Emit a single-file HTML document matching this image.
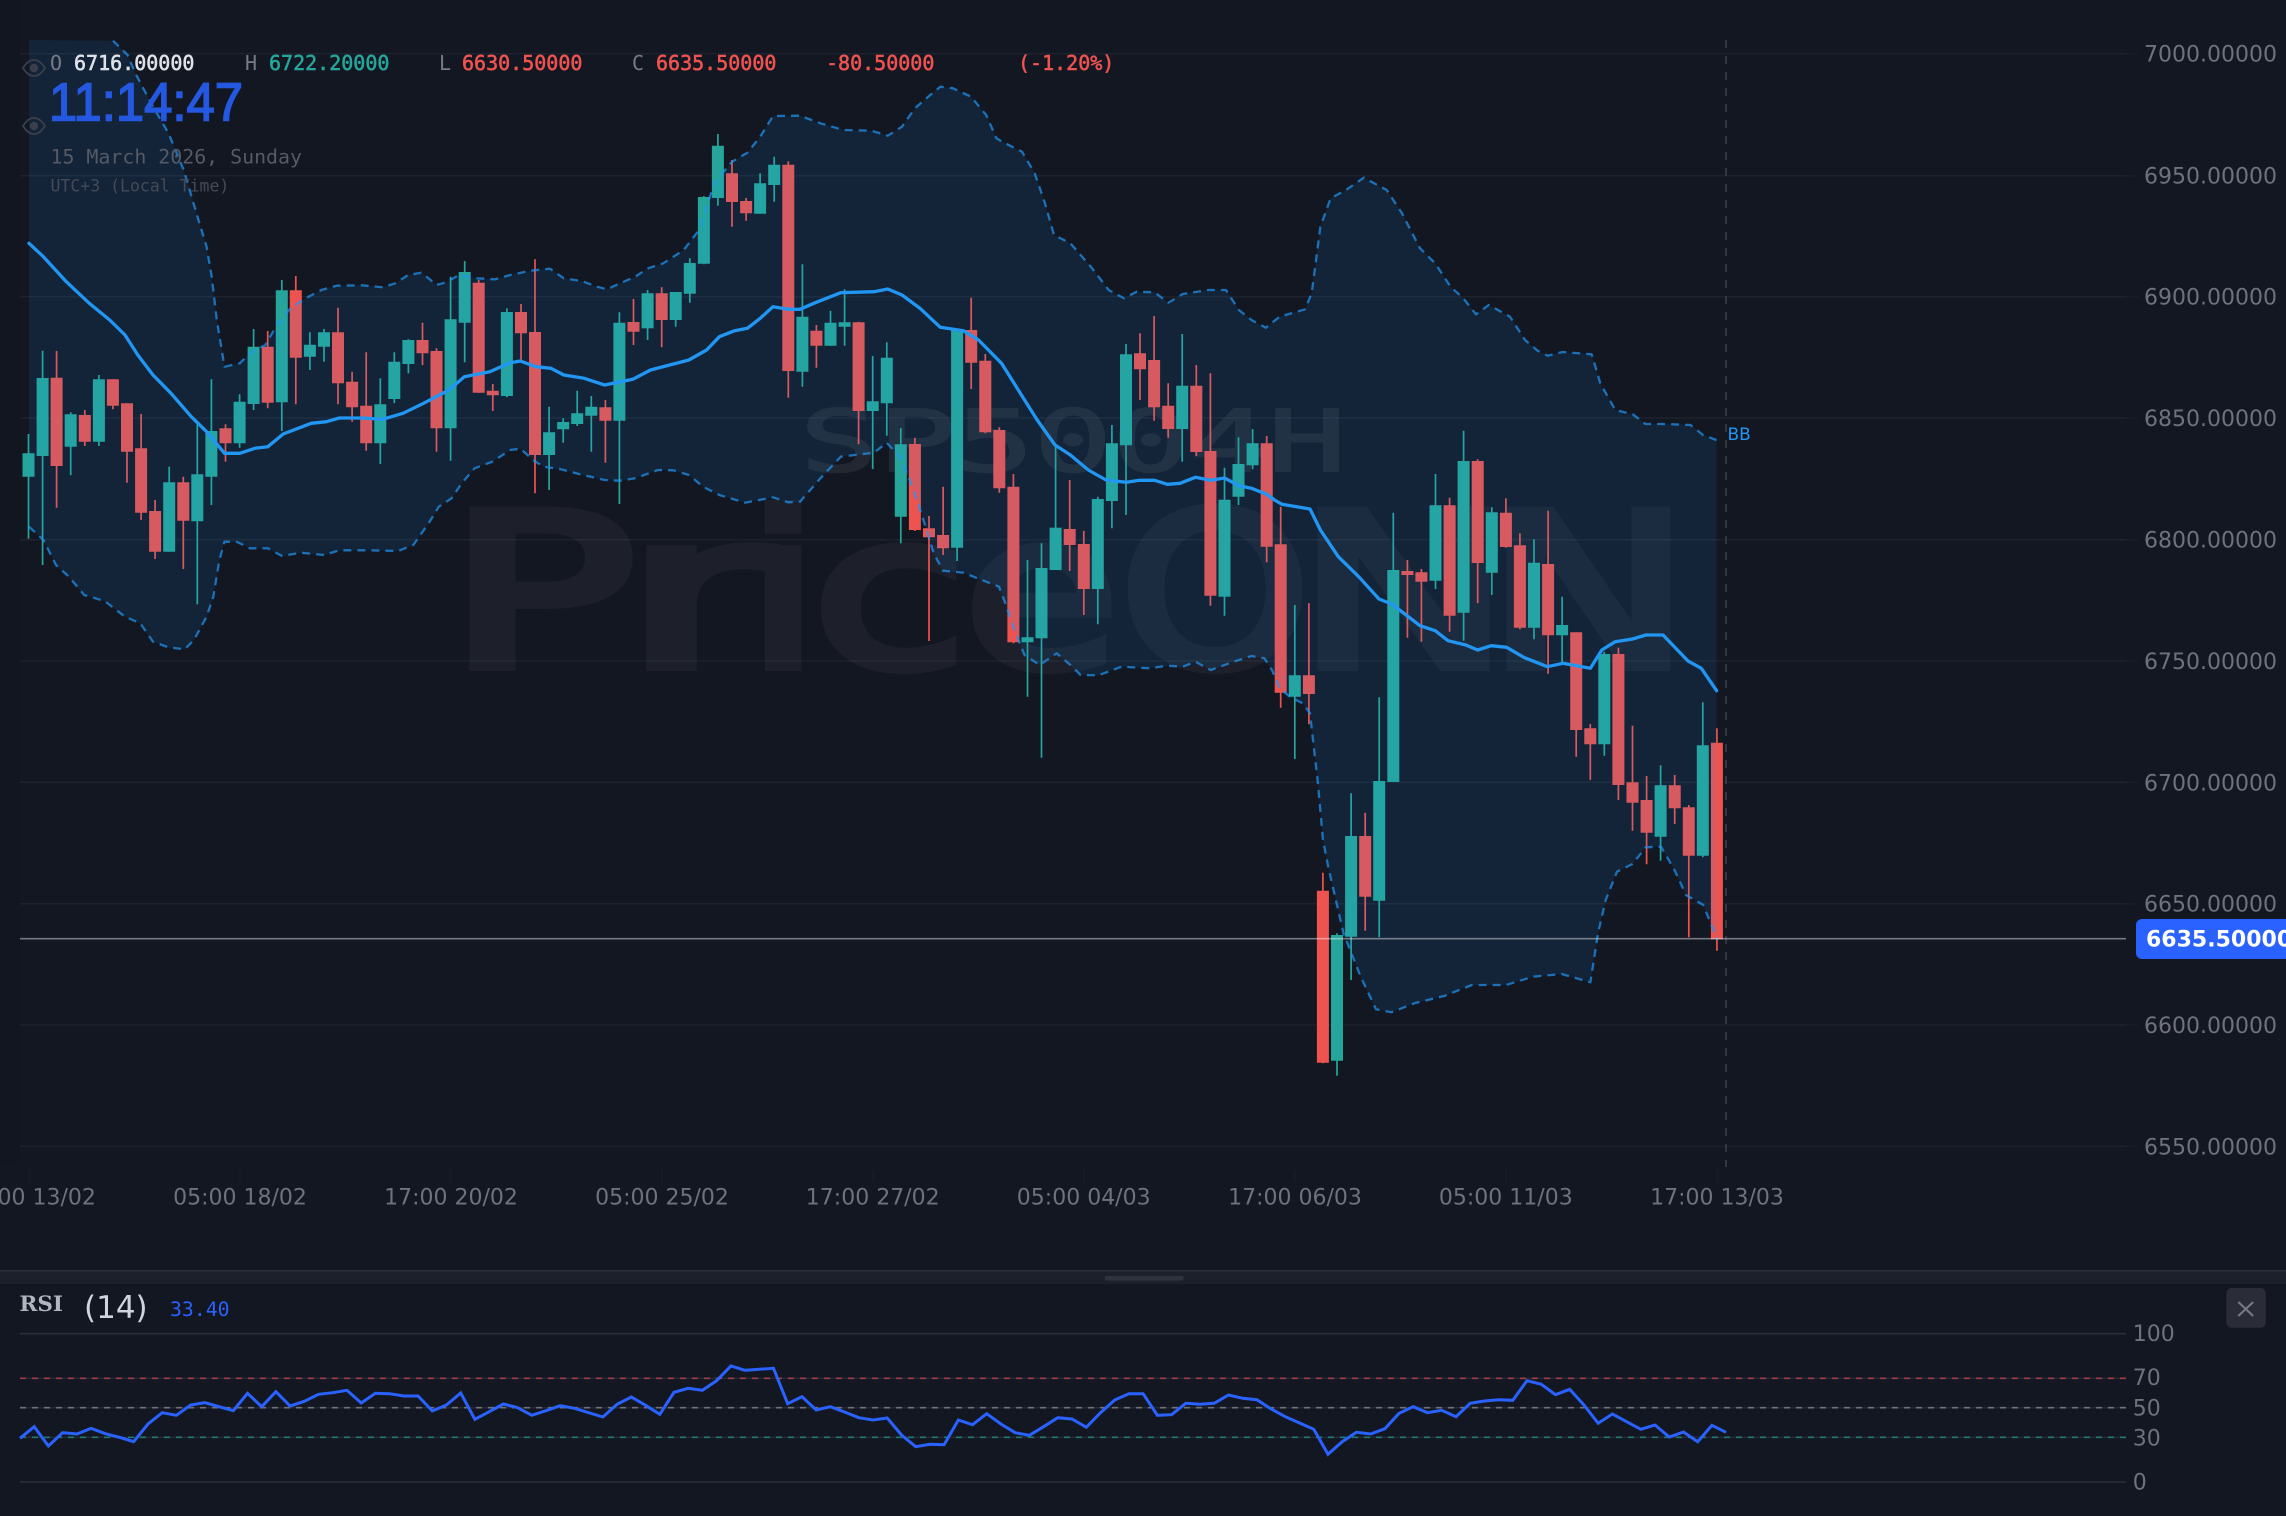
<!DOCTYPE html>
<html><head><meta charset="utf-8"><title>Chart</title>
<style>
html,body{margin:0;padding:0;background:#131722;width:2286px;height:1516px;overflow:hidden}
svg{display:block;position:absolute;left:0;top:0}
text{white-space:pre}
.m{font-family:"DejaVu Sans Mono","Liberation Mono",monospace}
.s{font-family:"DejaVu Sans","Liberation Sans",sans-serif}
.ax{font-size:22px;fill:#6f727d}
.lb{font-size:20px;fill:#787b86}
.v{font-size:20px;stroke-width:.55px}
</style></head>
<body>
<svg width="2286" height="1516" viewBox="0 0 2286 1516" xmlns="http://www.w3.org/2000/svg">
<defs>
<clipPath id="cu"><polygon points="29,40 113,40.7 127.6,55 135.2,73 153,106.7 168.4,133 183.7,170 196.4,213 206.6,246.7 211.7,276.7 216.8,320 224.5,366.7 239.8,363.3 250,353 265.3,345 278,323 290.8,308 306,298 321.4,290 336.7,285.7 362.2,285.3 382.7,287.3 395.4,283.3 408.2,275 421,272.7 428.6,278.3 436.2,285 446.4,282.3 459,275 477,278.3 495,279.3 510.2,275 530.6,270.7 550,268.7 563.8,278.3 581.6,281 597,286.7 607,289.3 620,283.3 635.2,276.7 648,268.3 663.3,263.3 683.7,250 699,230 714.3,183.3 732,161.7 747.4,152.7 760.2,136.7 773,116 800,115.7 820.4,123.3 843.4,130 871.4,130.7 887.8,135.7 902,126.7 914.8,108.3 927.6,97.3 940.3,86.7 953,88.3 971,96.7 986.2,115 996.4,138.3 1004,142.7 1022,151.7 1034.7,173.3 1045,203.3 1054,235 1070.4,243.3 1090.8,266.7 1108.7,290 1124,298.3 1136.7,291.7 1154.6,292.3 1168.4,302.7 1182.7,294 1208,290 1226,290 1238.8,310 1251.5,320 1265.8,327.7 1279.6,316.7 1305,309.3 1311.7,293.3 1320.4,226.7 1330.6,198.3 1346,190 1363.8,177.7 1386.7,190 1402,213.3 1420,248.3 1435.2,263.3 1450.5,286.7 1463.3,298.3 1476,314.3 1488.8,305 1510,316.7 1525,340 1537.6,350.7 1547.6,355.7 1562.7,352 1591.7,354.3 1600.3,383.3 1615.3,410 1632.8,414.3 1645.4,424 1665.4,424 1690.5,425 1703,435 1716.5,440 1716.5,1516 29,1516"/></clipPath>
<clipPath id="cl"><polygon points="29,526.7 43.4,540 56,565 68.9,576.7 84.2,595 104.6,601 125,616.7 140.3,623.3 153,641.7 168.4,647.3 184.7,649.3 193.9,640 206.6,616.7 213.3,596.7 219.4,560 224.5,541.7 237.2,542 250,548.3 267.9,548.3 282,556 301,552.7 324,555 339.3,550.3 367.3,550.3 398,551 413.3,545 428.6,523.3 438.8,506.7 451.5,498.3 461.7,483.3 474.5,468.3 492.3,461.7 510.2,450 520.4,448.7 533,460 543.4,466.7 561,469.3 579,474 604.6,480 620,480.7 635,478.3 658,470 673.5,470.3 688.8,475 704,487.3 719.4,495 745,502.7 773,497.3 788,502.3 800,501.7 820.4,478.3 840.8,456.7 874,452.7 886.7,442.7 899.5,456.7 909.7,480 922.4,516.7 933.7,553.3 942.9,570.7 963.3,572.7 999,586.7 1006.6,606.7 1014.3,630 1024.5,655 1039.8,665 1056.6,653.3 1070.4,665 1080.6,675 1098.5,675.3 1121.4,666.7 1149.5,668.3 1167.3,665.7 1182.7,666.7 1195.4,661.7 1210.7,670 1233.7,661.7 1251.5,656 1264.3,658.3 1272,670 1279.6,688.3 1289.8,696.7 1302.6,703.3 1310,713.3 1317.9,783.3 1323,840 1328.2,866.7 1343.5,933.3 1360.7,976.7 1376,1009.3 1391.4,1012.3 1414.3,1003.3 1445,995.7 1471.7,985 1506,985 1533,976.7 1561.7,974 1590.4,982.3 1598,933.3 1605.7,900 1617,871.7 1632.5,864 1645.8,847.3 1661,846.7 1674.5,870 1686,895 1703.3,905 1717.4,940 1717.4,0 29,0"/></clipPath>
</defs>

<rect width="2286" height="1516" fill="#131722"/>
<rect x="0" y="0" width="20" height="1165" fill="#121620"/>

<!-- grid -->
<g stroke="#1e222d" stroke-width="1.6">
<path d="M20 53.7H2126M20 175.7H2126M20 296.7H2126M20 418H2126M20 539.7H2126M20 661H2126M20 782.3H2126M20 903.7H2126M20 1025H2126M20 1146.3H2126"/>
</g>
<g stroke="#191d27" stroke-width="1.5"><path d="M2126 53.7H2138M2126 175.7H2138M2126 296.7H2138M2126 418H2138M2126 539.7H2138M2126 661H2138M2126 782.3H2138M2126 903.7H2138M2126 1025H2138M2126 1146.3H2138"/>
<path d="M29 1170V1182M240 1170V1182M451 1170V1182M662 1170V1182M873 1170V1182M1084 1170V1182M1295 1170V1182M1506 1170V1182M1717 1170V1182"/></g>

<!-- watermark -->
<g font-family="DejaVu Sans" font-size="212" fill="#fff" stroke="#fff" stroke-width="10" opacity="0.04">
<text x="446" y="666" textLength="190" lengthAdjust="spacingAndGlyphs">P</text>
<text x="622" y="666" textLength="150" lengthAdjust="spacingAndGlyphs">r</text>
<text x="746" y="666" textLength="74" lengthAdjust="spacingAndGlyphs">i</text>
<text x="812" y="666" textLength="155" lengthAdjust="spacingAndGlyphs">c</text>
<text x="964" y="666" textLength="155" lengthAdjust="spacingAndGlyphs">e</text>
<text x="1120" y="666" textLength="190" lengthAdjust="spacingAndGlyphs">O</text>
<text x="1296" y="666" textLength="215" lengthAdjust="spacingAndGlyphs">N</text>
<text x="1486" y="666" textLength="205" lengthAdjust="spacingAndGlyphs">N</text>
</g>
<text x="800" y="471" font-family="DejaVu Sans Mono" font-size="85" fill="#fff" stroke="#fff" stroke-width="2" opacity="0.065" textLength="546" lengthAdjust="spacingAndGlyphs">SP5004H</text>

<!-- candles -->
<path fill="none" stroke="#26a69a" stroke-width="1.7" d="M28.5 434V538.7M42.6 350.7V565M70.7 412.3V475.3M98.9 375V446M169.2 466.7V551.7M197.3 423V604.3M211.4 379.3V505M239.6 394.3V447.7M253.6 329V410M281.8 280V431M309.9 332.3V370M324 329V361.7M380.3 378.3V464M394.3 352.3V403.3M408.4 339.3V373.3M450.6 276.7V460.7M464.7 261V362.3M506.9 308.3V397.3M549.1 406.7V490M563.2 418.3V442.7M577.2 390.7V426M591.3 396V451.7M619.4 312.3V504M647.6 290V340M675.7 292V326.7M689.8 258.3V302.7M703.9 196V264.3M717.9 134V205.7M760.1 173.3V213.7M774.2 156.7V201.7M802.4 264.3V386.7M830.5 310.7V345.7M844.6 289.3V345.7M872.7 356V469M886.8 342.3V435.7M900.8 428.3V543.3M957.1 330V561M1027.5 560V696.7M1041.5 543.3V757.7M1055.6 446.7V570M1097.8 496.7V624.3M1111.9 425V528.3M1126 344V515M1182.2 334V461.7M1224.5 467.7V615.7M1238.5 437.3V505M1252.6 429V469.3M1294.8 605V759M1337 933.3V1075.7M1351.1 793.3V980M1379.2 697.3V937.3M1393.3 512.7V782M1435.5 474V589M1463.6 430.7V640.7M1491.8 507.3V595M1534 539.3V639.3M1562.1 596.7V663M1604.3 651.7V755.7M1660.6 765.3V860.7M1702.8 702.3V857.3"/>
<path fill="#26a69a" d="M22.5 453.3h12V476.7h-12zM36.6 378h12V456h-12zM64.7 414.3h12V446.7h-12zM92.9 379.3h12V441.7h-12zM163.2 482.3h12V551.7h-12zM191.3 474.3h12V521.3h-12zM205.4 431h12V476.7h-12zM233.6 401.7h12V443.3h-12zM247.6 346.7h12V404h-12zM275.8 290.3h12V402.3h-12zM303.9 344.7h12V356.7h-12zM318 332.3h12V346.7h-12zM374.3 404.3h12V443.3h-12zM388.3 361.7h12V399h-12zM402.4 340h12V364h-12zM444.6 319.3h12V428.3h-12zM458.7 272h12V322.7h-12zM500.9 312h12V396h-12zM543.1 432.3h12V455h-12zM557.2 422h12V429.3h-12zM571.2 413.3h12V424h-12zM585.3 406.7h12V415.7h-12zM613.4 322.7h12V420.7h-12zM641.6 293.3h12V328.3h-12zM669.7 292h12V320h-12zM683.8 263h12V293.7h-12zM697.9 197h12V263.7h-12zM711.9 145.7h12V198h-12zM754.1 183.3h12V213.7h-12zM768.2 164.7h12V185h-12zM796.4 316.7h12V371.7h-12zM824.5 322.7h12V345.7h-12zM838.6 322.3h12V326.7h-12zM866.7 401.3h12V411h-12zM880.8 357.7h12V403.3h-12zM894.8 444.3h12V516.7h-12zM951.1 330h12V547.7h-12zM1021.5 637.3h12V642.3h-12zM1035.5 568h12V638.3h-12zM1049.6 527.7h12V570h-12zM1091.8 499h12V589h-12zM1105.9 443.3h12V501h-12zM1120 354.3h12V445.3h-12zM1176.2 385.7h12V429h-12zM1218.5 499.7h12V596.7h-12zM1232.5 464h12V496.7h-12zM1246.6 443.3h12V465.3h-12zM1288.8 675.3h12V696.7h-12zM1331 935h12V1060.7h-12zM1345.1 836h12V936.7h-12zM1373.2 781h12V900.7h-12zM1387.3 570h12V782h-12zM1429.5 505.3h12V580.7h-12zM1457.6 461h12V612.7h-12zM1485.8 512.3h12V572.7h-12zM1528 562.7h12V627.7h-12zM1556.1 625h12V635.3h-12zM1598.3 654h12V744.3h-12zM1654.6 785.3h12V836.7h-12zM1696.8 745.3h12V855.7h-12z"/>
<path fill="none" stroke="#ef5350" stroke-width="1.7" d="M56.6 351V507.7M84.8 410V446M112.9 379.3V409.3M127 403.3V482.7M141.1 414V520M155.1 500V559M183.3 476.7V569M225.5 424.3V461.7M267.7 331V408.3M295.8 276V404.3M338 307.7V404.3M352.1 371.7V421.7M366.2 352.3V450.7M422.5 322.7V365M436.5 348.3V451.7M478.7 280V392.7M492.8 384V411M521 304V360M535 259.3V493.3M605.4 400V462.7M633.5 299V345M661.7 287.3V347.3M732 160V226.7M746.1 198V220.7M788.3 161.3V397.7M816.4 325V367.7M858.6 321.7V444.3M914.9 437.7V531M929 516V641M943.1 486.7V555M971.2 297.7V389M985.3 354V433.3M999.3 427.3V492.7M1013.4 474V643.3M1069.7 480V571M1083.8 531V615M1140 333.3V400M1154.1 316V420.7M1168.2 383.3V437.7M1196.3 365V456M1210.4 373.3V605.7M1266.7 436V562.3M1280.7 506.7V707.7M1308.9 603.3V724.3M1322.9 872.7V1063.3M1365.2 812.7V930.7M1407.4 560V637.7M1421.4 569V641.7M1449.6 497.7V631.7M1477.7 459.3V603.3M1505.9 498.3V547.7M1519.9 533.3V629.3M1548.1 510.7V673.7M1576.2 632.3V756.7M1590.3 724V780M1618.4 647.7V800M1632.5 725.7V830.7M1646.6 776V864.3M1674.7 775V824M1688.8 805V937.3M1716.9 728.3V950.7"/>
<path fill="#ef5350" d="M50.6 377.7h12V466h-12zM78.8 415h12V441.7h-12zM106.9 379.3h12V405.7h-12zM121 403.3h12V451.7h-12zM135.1 448.3h12V512.7h-12zM149.1 511h12V551.7h-12zM177.3 482.3h12V520.7h-12zM219.5 428.3h12V443.3h-12zM261.7 346.7h12V402.7h-12zM289.8 290.3h12V357.7h-12zM332 332.3h12V383.3h-12zM346.1 381.7h12V407.3h-12zM360.2 405.7h12V443.3h-12zM416.5 340h12V353.3h-12zM430.5 351h12V428.3h-12zM472.7 282.7h12V392.7h-12zM486.8 390.7h12V395.3h-12zM515 312h12V333.3h-12zM529 332h12V455h-12zM599.4 407.3h12V420.7h-12zM627.5 322h12V331.7h-12zM655.7 293.3h12V320h-12zM726 173.3h12V202h-12zM740.1 201h12V213.3h-12zM782.3 164.7h12V371h-12zM810.4 330.7h12V345.7h-12zM852.6 322.3h12V411h-12zM908.9 444h12V530h-12zM923 528.3h12V537.3h-12zM937.1 535h12V548.3h-12zM965.2 330h12V362.7h-12zM979.3 360.7h12V432.3h-12zM993.3 430h12V488.3h-12zM1007.4 486.7h12V642.3h-12zM1063.7 529h12V545h-12zM1077.8 544h12V589h-12zM1134 353.3h12V369.3h-12zM1148.1 360h12V407.3h-12zM1162.2 405.7h12V429h-12zM1190.3 385.7h12V452h-12zM1204.4 451h12V595.7h-12zM1260.7 443.3h12V546.7h-12zM1274.7 544.3h12V692.7h-12zM1302.9 675.3h12V694h-12zM1316.9 890.7h12V1062.7h-12zM1359.2 836h12V896.7h-12zM1401.4 571h12V575h-12zM1415.4 572.3h12V581.7h-12zM1443.6 505.3h12V615.7h-12zM1471.7 461h12V563h-12zM1499.9 512.7h12V547h-12zM1513.9 545.3h12V627.7h-12zM1542.1 564h12V635.3h-12zM1570.2 632.3h12V730h-12zM1584.3 728.3h12V744.3h-12zM1612.4 654h12V785h-12zM1626.5 782.3h12V802.7h-12zM1640.6 800h12V832.7h-12zM1668.7 785.3h12V808.3h-12zM1682.8 807.3h12V855.7h-12zM1710.9 742.7h12V939.3h-12z"/>

<!-- bollinger fill over candles -->
<g clip-path="url(#cl)"><rect x="29" y="40" width="1688" height="1100" fill="#2196f3" fill-opacity="0.105" clip-path="url(#cu)"/></g>

<!-- bb lines -->
<g fill="none" stroke="#2196f3" stroke-width="2.3" stroke-opacity="0.7" stroke-dasharray="8 6" stroke-linejoin="round">
<polyline points="113,40.7 127.6,55 135.2,73 153,106.7 168.4,133 183.7,170 196.4,213 206.6,246.7 211.7,276.7 216.8,320 224.5,366.7 239.8,363.3 250,353 265.3,345 278,323 290.8,308 306,298 321.4,290 336.7,285.7 362.2,285.3 382.7,287.3 395.4,283.3 408.2,275 421,272.7 428.6,278.3 436.2,285 446.4,282.3 459,275 477,278.3 495,279.3 510.2,275 530.6,270.7 550,268.7 563.8,278.3 581.6,281 597,286.7 607,289.3 620,283.3 635.2,276.7 648,268.3 663.3,263.3 683.7,250 699,230 714.3,183.3 732,161.7 747.4,152.7 760.2,136.7 773,116 800,115.7 820.4,123.3 843.4,130 871.4,130.7 887.8,135.7 902,126.7 914.8,108.3 927.6,97.3 940.3,86.7 953,88.3 971,96.7 986.2,115 996.4,138.3 1004,142.7 1022,151.7 1034.7,173.3 1045,203.3 1054,235 1070.4,243.3 1090.8,266.7 1108.7,290 1124,298.3 1136.7,291.7 1154.6,292.3 1168.4,302.7 1182.7,294 1208,290 1226,290 1238.8,310 1251.5,320 1265.8,327.7 1279.6,316.7 1305,309.3 1311.7,293.3 1320.4,226.7 1330.6,198.3 1346,190 1363.8,177.7 1386.7,190 1402,213.3 1420,248.3 1435.2,263.3 1450.5,286.7 1463.3,298.3 1476,314.3 1488.8,305 1510,316.7 1525,340 1537.6,350.7 1547.6,355.7 1562.7,352 1591.7,354.3 1600.3,383.3 1615.3,410 1632.8,414.3 1645.4,424 1665.4,424 1690.5,425 1703,435 1716.5,440"/>
<polyline points="29,526.7 43.4,540 56,565 68.9,576.7 84.2,595 104.6,601 125,616.7 140.3,623.3 153,641.7 168.4,647.3 184.7,649.3 193.9,640 206.6,616.7 213.3,596.7 219.4,560 224.5,541.7 237.2,542 250,548.3 267.9,548.3 282,556 301,552.7 324,555 339.3,550.3 367.3,550.3 398,551 413.3,545 428.6,523.3 438.8,506.7 451.5,498.3 461.7,483.3 474.5,468.3 492.3,461.7 510.2,450 520.4,448.7 533,460 543.4,466.7 561,469.3 579,474 604.6,480 620,480.7 635,478.3 658,470 673.5,470.3 688.8,475 704,487.3 719.4,495 745,502.7 773,497.3 788,502.3 800,501.7 820.4,478.3 840.8,456.7 874,452.7 886.7,442.7 899.5,456.7 909.7,480 922.4,516.7 933.7,553.3 942.9,570.7 963.3,572.7 999,586.7 1006.6,606.7 1014.3,630 1024.5,655 1039.8,665 1056.6,653.3 1070.4,665 1080.6,675 1098.5,675.3 1121.4,666.7 1149.5,668.3 1167.3,665.7 1182.7,666.7 1195.4,661.7 1210.7,670 1233.7,661.7 1251.5,656 1264.3,658.3 1272,670 1279.6,688.3 1289.8,696.7 1302.6,703.3 1310,713.3 1317.9,783.3 1323,840 1328.2,866.7 1343.5,933.3 1360.7,976.7 1376,1009.3 1391.4,1012.3 1414.3,1003.3 1445,995.7 1471.7,985 1506,985 1533,976.7 1561.7,974 1590.4,982.3 1598,933.3 1605.7,900 1617,871.7 1632.5,864 1645.8,847.3 1661,846.7 1674.5,870 1686,895 1703.3,905 1717.4,940"/>
</g>
<polyline fill="none" stroke="#2196f3" stroke-width="3.3" stroke-linejoin="round" stroke-linecap="round" points="29,243.3 43.4,256.7 66.3,281.7 89.3,303.3 109.7,320 125,335 137.8,355 153,375 171,393.3 191.3,416.7 206.6,431.7 224.5,453.3 239.8,453.3 255,448.3 267.9,446.7 283.2,434 311.2,423.3 326.5,421.7 339.3,418 362.2,418 382.7,419.3 403,413.3 423.5,403.3 449,390 464.3,376.7 489.8,371.7 510.2,362.7 520.4,361 535.7,366.7 551,368.3 563.8,375 584.2,378.3 604.6,385 632.7,379.3 650.5,370 688.8,360 706.6,350 719.4,336.7 734.7,330.7 747.4,328.3 760.2,318.3 773,306.7 788.3,309.3 800,309.3 815.3,302.7 840.8,292.7 874,291.7 887.8,289 902,295 920,308.3 940.3,327.3 963.3,330.7 978.6,340 1001.5,363.3 1019.4,391.7 1037.2,420 1055,445 1070.4,455 1088.3,470 1106,480 1126.5,482.3 1139.3,480.3 1154.6,480.3 1167.3,484.3 1180,483.3 1195.4,477.3 1210.7,480.3 1224.5,478 1238.8,485.7 1251.5,488.3 1266.8,494.3 1274.5,500 1282,504.3 1310,509 1320.4,530 1338.3,556.7 1358.7,576.7 1379,599 1391.8,604 1420,625.7 1435.2,630.7 1448,640.7 1465.8,645 1477.6,650 1491.3,645.7 1506.6,647.3 1524.5,657.7 1547.4,666.7 1562.8,663.3 1590.4,668.3 1601.8,650 1615.2,641.7 1632.5,639 1645.8,635 1663,635 1688,661 1701.3,668.3 1716.6,690.7"/>

<!-- crosshair & price line -->
<path d="M1726 40V1167" stroke="#3a3e49" stroke-width="1.6" stroke-dasharray="8 8"/>
<path d="M20 938.7H2126" stroke="#fff" stroke-opacity="0.42" stroke-width="1.6"/>
<text x="1727.5" y="440" class="s" font-size="17" fill="#2196f3">BB</text>

<!-- legend -->
<text x="50" y="70" class="m lb">O</text>
<text x="74" y="70" class="m v" fill="#dfe2e8" stroke="#dfe2e8">6716.00000</text>
<text x="245" y="70" class="m lb">H</text>
<text x="269" y="70" class="m v" fill="#26a69a" stroke="#26a69a">6722.20000</text>
<text x="439" y="70" class="m lb">L</text>
<text x="462" y="70" class="m v" fill="#ef5350" stroke="#ef5350">6630.50000</text>
<text x="632" y="70" class="m lb">C</text>
<text x="656" y="70" class="m v" fill="#ef5350" stroke="#ef5350">6635.50000</text>
<text x="826" y="70" class="m v" fill="#ef5350" stroke="#ef5350">-80.50000</text>
<text x="1018" y="70" class="m v" fill="#ef5350" stroke="#ef5350">(-1.20%)</text>

<text x="49" y="120.7" font-family="Liberation Sans" font-size="54" fill="#2458e0" stroke="#2458e0" stroke-width="1.6" textLength="194" lengthAdjust="spacingAndGlyphs">11:14:47</text>
<text x="50.5" y="163.3" class="m" font-size="19.9" fill="#555a66">15 March 2026, Sunday</text>
<text x="50.5" y="191.5" class="m" font-size="16.5" fill="#454a56">UTC+3 (Local Time)</text>

<!-- eyes -->
<g fill="none" stroke="#3b3f4b" stroke-width="1.8">
<path d="M23 68C27 62 30 60 34 60S41 62 45 68C41 74 38 76 34 76S27 74 23 68Z"/>
<path d="M23 126C27 120 30 118 34 118S41 120 45 126C41 132 38 134 34 134S27 132 23 126Z"/>
</g>
<circle cx="34" cy="68" r="4.2" fill="#3b3f4b"/><circle cx="34" cy="126" r="4.2" fill="#3b3f4b"/>

<!-- price axis -->
<g class="s ax" font-family="DejaVu Sans">
<text x="2144" y="61.7">7000.00000</text>
<text x="2144" y="183.7">6950.00000</text>
<text x="2144" y="304.7">6900.00000</text>
<text x="2144" y="426">6850.00000</text>
<text x="2144" y="547.7">6800.00000</text>
<text x="2144" y="669">6750.00000</text>
<text x="2144" y="790.3">6700.00000</text>
<text x="2144" y="911.7">6650.00000</text>
<text x="2144" y="1033">6600.00000</text>
<text x="2144" y="1154.3">6550.00000</text>
</g>
<path d="M2286 919H2142a6 6 0 0 0-6 6V953a6 6 0 0 0 6 6H2286Z" fill="#2962ff"/>
<text x="2146" y="946.5" class="s" font-size="22" font-weight="700" fill="#fff">6635.50000</text>

<!-- time axis -->
<g class="s ax" text-anchor="middle">
<text x="29" y="1204.3">17:00 13/02</text>
<text x="240" y="1204.3">05:00 18/02</text>
<text x="451" y="1204.3">17:00 20/02</text>
<text x="662" y="1204.3">05:00 25/02</text>
<text x="872.7" y="1204.3">17:00 27/02</text>
<text x="1083.7" y="1204.3">05:00 04/03</text>
<text x="1295" y="1204.3">17:00 06/03</text>
<text x="1505.8" y="1204.3">05:00 11/03</text>
<text x="1717" y="1204.3">17:00 13/03</text>
</g>

<!-- separator -->
<rect x="0" y="1270" width="2286" height="14" fill="#1c202a"/>
<rect x="0" y="1270" width="2286" height="1.6" fill="#2a2e39"/>
<rect x="1104.6" y="1276" width="79" height="4.5" rx="2.2" fill="#2f333e"/>

<!-- RSI pane -->
<g fill="none" stroke-width="1.6">
<path d="M20 1333.7H2126M20 1482H2126" stroke="#2a2e39"/>
<path d="M20 1378.3H2126M20 1407.7H2126M20 1437.3H2126" stroke="#262a35"/>
<path d="M20 1378.3H2126" stroke="#a53d44" stroke-dasharray="6 6"/>
<path d="M20 1407.7H2126" stroke="#6f717b" stroke-dasharray="6 6"/>
<path d="M20 1437.3H2126" stroke="#1f7a72" stroke-dasharray="6 6"/>
</g>
<polyline fill="none" stroke="#2962ff" stroke-width="3" stroke-linejoin="miter" points="20,1438.3 34.2,1426.7 48.4,1446 62.7,1432.7 76.9,1434 91.1,1428.3 105.3,1433.7 119.5,1437.3 133.7,1441.7 148,1424 162.2,1412.7 176.4,1415.3 190.6,1405 204.8,1402.7 219,1406.7 233.3,1410.7 247.5,1393.3 261.7,1406.7 275.9,1391.7 290.1,1406 304.3,1401.3 318.6,1394.3 332.8,1392.7 347,1390.3 361.2,1403 375.4,1393.3 389.6,1393.7 403.8,1396 418.1,1396 432.3,1411 446.5,1405 460.7,1393 474.9,1419.3 489.2,1411.7 503.4,1404 517.6,1407.7 531.8,1415.3 546,1410.7 560.2,1405.7 574.5,1408.3 588.7,1412.7 602.9,1417 617.1,1404.3 631.3,1397 645.6,1405.3 659.8,1414.3 674,1392.3 688.2,1388.3 702.4,1390.3 716.6,1380.7 730.9,1366 745.1,1370.3 759.3,1369.3 773.5,1368.3 787.7,1403.7 802,1396.7 816.2,1410 830.4,1406.7 844.6,1412 858.8,1417.7 873,1420 887.2,1418 901.5,1435 915.7,1446.7 929.9,1444.3 944.1,1444.7 958.3,1420 972.5,1424.7 986.7,1413.7 1000.9,1424 1015.2,1432.7 1029.4,1435.3 1043.6,1426.7 1057.8,1417.7 1072,1419 1086.3,1427.3 1100.5,1412.7 1114.7,1400 1128.9,1393.7 1143.1,1393.7 1157.4,1415.3 1171.6,1414.7 1185.8,1403.3 1200,1404.3 1214.2,1403.3 1228.5,1395 1242.7,1398.3 1256.9,1399.7 1271.1,1409 1285.3,1416.7 1299.6,1423 1313.8,1429.3 1328,1454.3 1342.2,1441.7 1356.4,1432.3 1370.7,1434 1384.9,1428.7 1399.1,1413.3 1413.3,1406.7 1427.5,1412.7 1441.7,1410.3 1456,1416.7 1470.2,1403.3 1484.4,1401 1498.6,1399.7 1512.8,1400.3 1527,1380.7 1541.3,1384.3 1555.5,1394.7 1569.7,1389.3 1583.9,1405 1598.2,1423.3 1612.4,1414 1626.6,1421.7 1640.8,1429.3 1655,1425 1669.3,1437 1683.5,1432 1697.7,1441.7 1711.9,1425.3 1726,1432.3"/>

<text x="19.5" y="1311" font-family="DejaVu Serif" font-weight="700" font-size="21.5" fill="#b2b5be">RSI</text>
<text x="84" y="1318" class="s" font-size="31" fill="#d1d4dc">(14)</text>
<text x="170" y="1316" class="m" font-size="19.8" fill="#2962ff">33.40</text>

<g class="s ax">
<text x="2132.8" y="1341">100</text>
<text x="2132.8" y="1385">70</text>
<text x="2132.8" y="1415.3">50</text>
<text x="2132.8" y="1445.3">30</text>
<text x="2132.8" y="1489.3">0</text>
</g>

<rect x="2226.4" y="1288" width="39.4" height="39.7" rx="5" fill="#2a2d38"/>
<path d="M2238.3 1302L2253.2 1316M2253.2 1302L2238.3 1316" stroke="#787b86" stroke-width="2" fill="none"/>
</svg>
</body></html>
